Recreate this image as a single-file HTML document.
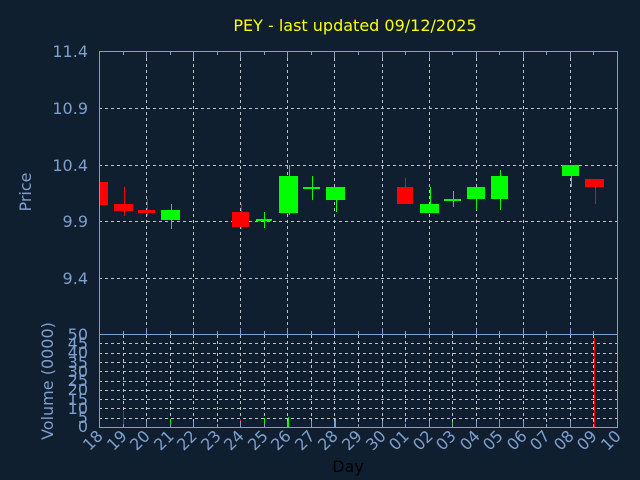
<!DOCTYPE html>
<html><head><meta charset="utf-8"><style>
html,body{margin:0;padding:0;background:#0f1f2f;}
svg{display:block;font-family:"DejaVu Sans","Liberation Sans",sans-serif;}
</style></head><body>
<svg id="s" width="640" height="480" viewBox="0 0 640 480" xmlns="http://www.w3.org/2000/svg">
<rect width="640" height="480" fill="#0f1f2f"/>
<text x="355" y="31" fill="#ffff00" font-size="16" text-anchor="middle">PEY - last updated 09/12/2025</text>
<g id="grid" stroke="#c0c0c0" stroke-width="1" stroke-dasharray="3,3" fill="none"></g>
<g fill="#7f9fcf" font-size="16" text-anchor="end">
<text x="88" y="57">11.4</text>
<text x="88" y="114">10.9</text>
<text x="88" y="171">10.4</text>
<text x="88" y="227">9.9</text>
<text x="88" y="284">9.4</text>
</g>
<text transform="translate(31,192) rotate(-90)" fill="#7f9fcf" font-size="16" text-anchor="middle">Price</text>
<text transform="translate(53,381) rotate(-90)" fill="#7f9fcf" font-size="16" text-anchor="middle">Volume (0000)</text>
<g fill="#7f9fcf" font-size="16" text-anchor="end">
<text x="88" y="340">50</text><text x="88" y="358">40</text><text x="88" y="377">30</text>
<text x="88" y="395">20</text><text x="88" y="414">10</text><text x="88" y="432">0</text>
<text x="88" y="349">45</text><text x="88" y="368">35</text><text x="88" y="386">25</text>
<text x="88" y="405">15</text><text x="88" y="423">5</text>
</g>
<g id="cand"></g>
<rect x="99.5" y="51.5" width="518" height="283" fill="none" stroke="#7f9fcf"/>
<rect x="99.5" y="334.5" width="518" height="93" fill="none" stroke="#7f9fcf"/>
<g id="ticks" stroke="#7f9fcf"></g>
<g fill="#7f9fcf" font-size="16" text-anchor="end">
<text transform="translate(104,437) rotate(-45)">18</text>
<text transform="translate(128,437) rotate(-45)">19</text>
<text transform="translate(151,437) rotate(-45)">20</text>
<text transform="translate(175,437) rotate(-45)">21</text>
<text transform="translate(198,437) rotate(-45)">22</text>
<text transform="translate(222,437) rotate(-45)">23</text>
<text transform="translate(245,437) rotate(-45)">24</text>
<text transform="translate(269,437) rotate(-45)">25</text>
<text transform="translate(292,437) rotate(-45)">26</text>
<text transform="translate(316,437) rotate(-45)">27</text>
<text transform="translate(339,437) rotate(-45)">28</text>
<text transform="translate(363,437) rotate(-45)">29</text>
<text transform="translate(387,437) rotate(-45)">30</text>
<text transform="translate(410,437) rotate(-45)">01</text>
<text transform="translate(434,437) rotate(-45)">02</text>
<text transform="translate(457,437) rotate(-45)">03</text>
<text transform="translate(481,437) rotate(-45)">04</text>
<text transform="translate(504,437) rotate(-45)">05</text>
<text transform="translate(528,437) rotate(-45)">06</text>
<text transform="translate(551,437) rotate(-45)">07</text>
<text transform="translate(575,437) rotate(-45)">08</text>
<text transform="translate(598,437) rotate(-45)">09</text>
<text transform="translate(622,437) rotate(-45)">10</text>
</g>
<text x="348" y="472" fill="#000" font-size="16" text-anchor="middle">Day</text>
</svg>
<script>
var NS="http://www.w3.org/2000/svg";
function el(p,t,a){var e=document.createElementNS(NS,t);for(var k in a)e.setAttribute(k,a[k]);document.getElementById(p).appendChild(e);return e;}
var step=518/22;
[108,165,221,278].forEach(function(y){el("grid","line",{x1:99,x2:617,y1:y+.5,y2:y+.5});});
for(var i=2;i<22;i+=2){var x=Math.round(99+i*step)+.5;el("grid","line",{x1:x,x2:x,y1:52,y2:334});}
for(var v=5;v<50;v+=5){var y=Math.round(427-v*93/50)+.5;el("grid","line",{x1:99,x2:617,y1:y,y2:y});}
for(var i=1;i<22;i++){var x=Math.round(99+i*step)+.5;el("grid","line",{x1:x,x2:x,y1:335,y2:427});}
for(var i=1;i<22;i++){var x=Math.round(99+i*step)+.5;var L=(i%2==0)?6:3;
el("ticks","line",{x1:x,x2:x,y1:52,y2:52+L});el("ticks","line",{x1:x,x2:x,y1:334,y2:334-L});
el("ticks","line",{x1:x,x2:x,y1:427,y2:427-L});}
var R="#ff0000",G="#00ff00";
var c=[[99,108,182,205,182,205,R],[114,133,204,211,187,216,R],[138,155,210,213,199,216,R],[161,180,210,220,204,229,G],
[232,249,212,227,204,229,R],[256,272,219,221,212,228,G],[279,298,176,213,165,215,G],[303,320,187,189,176,200,G],
[326,345,187,200,187,212,G],[397,413,187,204,178,204,R],[420,439,204,213,187,213,G],[444,461,199,201,191,207,G],
[467,485,187,199,187,210,G],[491,508,176,199,170,210,G],[562,579,165,176,165,187,G],[585,604,179,187,179,204,R]];
c.forEach(function(d){var cx=Math.round((d[0]+d[1])/2);
el("cand","rect",{x:cx,y:d[4],width:1,height:d[5]-d[4],fill:d[6]});
el("cand","rect",{x:d[0],y:d[2],width:d[1]-d[0],height:Math.max(2,d[3]-d[2]),fill:d[6]});});
var vb=[[123,411,R],[146,422,R],[170,419,G],[240,419,R],[264,418,G],[288,417,G],[311,421,G],[335,418,G],
[405,423,R],[429,422,G],[452,422,G],[476,422,G],[499,419,G],[570,422,G],[594,338,R]];
vb.forEach(function(d){el("cand","rect",{x:d[0],y:d[1],width:1,height:427-d[1],fill:d[2]});});
</script>
</body></html>
